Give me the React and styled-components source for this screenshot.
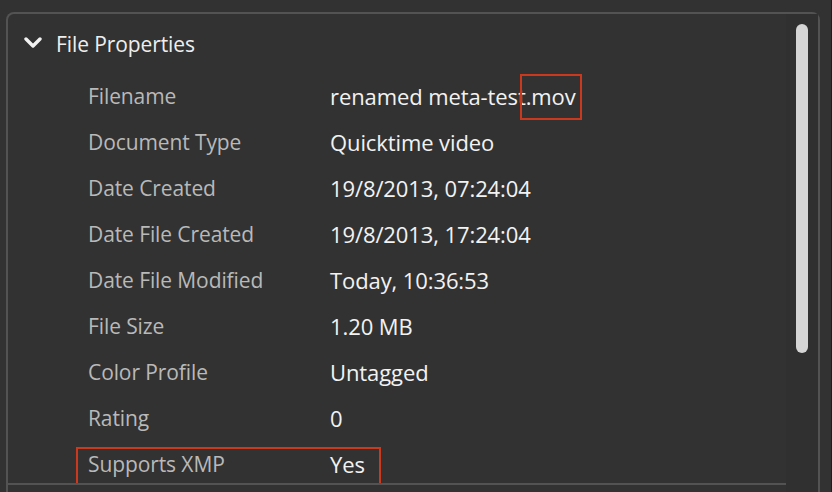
import styled, { createGlobalStyle } from "styled-components"

const GlobalStyle = createGlobalStyle`
    html, body {
        margin: 0;
        background: #323232;
        overflow: hidden;
    }
`

const rows = [
    { label: "Filename", value: "renamed meta-test", ext: ".mov" },
    { label: "Document Type", value: "Quicktime video" },
    { label: "Date Created", value: "19/8/2013, 07:24:04" },
    { label: "Date File Created", value: "19/8/2013, 17:24:04" },
    { label: "Date File Modified", value: "Today, 10:36:53" },
    { label: "File Size", value: "1.20 MB" },
    { label: "Color Profile", value: "Untagged" },
    { label: "Rating", value: "0" },
    { label: "Supports XMP", value: "Yes", marked: true },
]

function App() {
    return (
        <Page>
            <GlobalStyle />
            <Panel>
                <Main>
                    <Viewport>
                        <Header>
                            <Chevron width="18" height="12" viewBox="0 0 18 12">
                                <path d="M2 2 L9 9 L16 2" fill="none" stroke="#f2f2f2" strokeWidth="3.4" strokeLinecap="round" strokeLinejoin="round" />
                            </Chevron>
                            <Title>File Properties</Title>
                        </Header>
                        {rows.map((row) => (
                            <Row key={row.label}>
                                <Label>{row.label}</Label>
                                <Value>
                                    {row.value}
                                    {row.ext && <Ext>{row.ext}</Ext>}
                                </Value>
                                {row.marked && <Highlight />}
                            </Row>
                        ))}
                    </Viewport>
                </Main>
                <Track>
                    <Thumb />
                </Track>
            </Panel>
            <Edge />
        </Page>
    )
}

export default App

const Page = styled.div`
    height: 492px;
    display: flex;
    padding: 12px 0 0 6px;
    box-sizing: border-box;
    font-family: "Open Sans", "Noto Sans", sans-serif;
`

const Panel = styled.div`
    width: 812px;
    display: flex;
    border: 2px solid #535353;
    border-bottom: none;
    border-radius: 8px 8px 0 0;
`

const Main = styled.div`
    flex: 1;
`

const Viewport = styled.div`
    height: 469px;
    overflow: hidden;
    border-bottom: 2px solid #535353;
`

const Header = styled.div`
    height: 59px;
    display: flex;
    align-items: center;
    padding-left: 16px;
    gap: 14px;
`

const Chevron = styled.svg`
    display: block;
    margin-top: -1px;
`

const Title = styled.span`
    font-size: 21px;
    font-weight: 500;
    color: #eeeeee;
    letter-spacing: -0.1px;
`

const Row = styled.div`
    position: relative;
    height: 46px;
    display: flex;
    align-items: center;
    line-height: 1;
`

const Label = styled.span`
    width: 242px;
    padding-left: 80px;
    font-size: 21px;
    letter-spacing: -0.1px;
    color: #b9b9b9;
`

const Value = styled.span`
    font-size: 22px;
    font-weight: 500;
    letter-spacing: -0.1px;
    color: #f2f2f2;
`

const Ext = styled.span`
    outline: 2px solid #c8391d;
    padding: 5px 4px 7px 4px;
    margin-left: -4px;
`

const Highlight = styled.div`
    position: absolute;
    left: 68px;
    top: 6px;
    width: 301px;
    height: 36px;
    border: 2px solid #c8391d;
`

const Track = styled.div`
    width: 32px;
    background: #303030;
    padding: 10px 0 0 10px;
    box-sizing: border-box;
`

const Thumb = styled.div`
    width: 12px;
    height: 329px;
    border-radius: 6px;
    background: #d5d5d5;
`

const Edge = styled.div`
    width: 1px;
    margin-left: 11px;
    margin-top: -12px;
    background: #1e1e1e;
`
